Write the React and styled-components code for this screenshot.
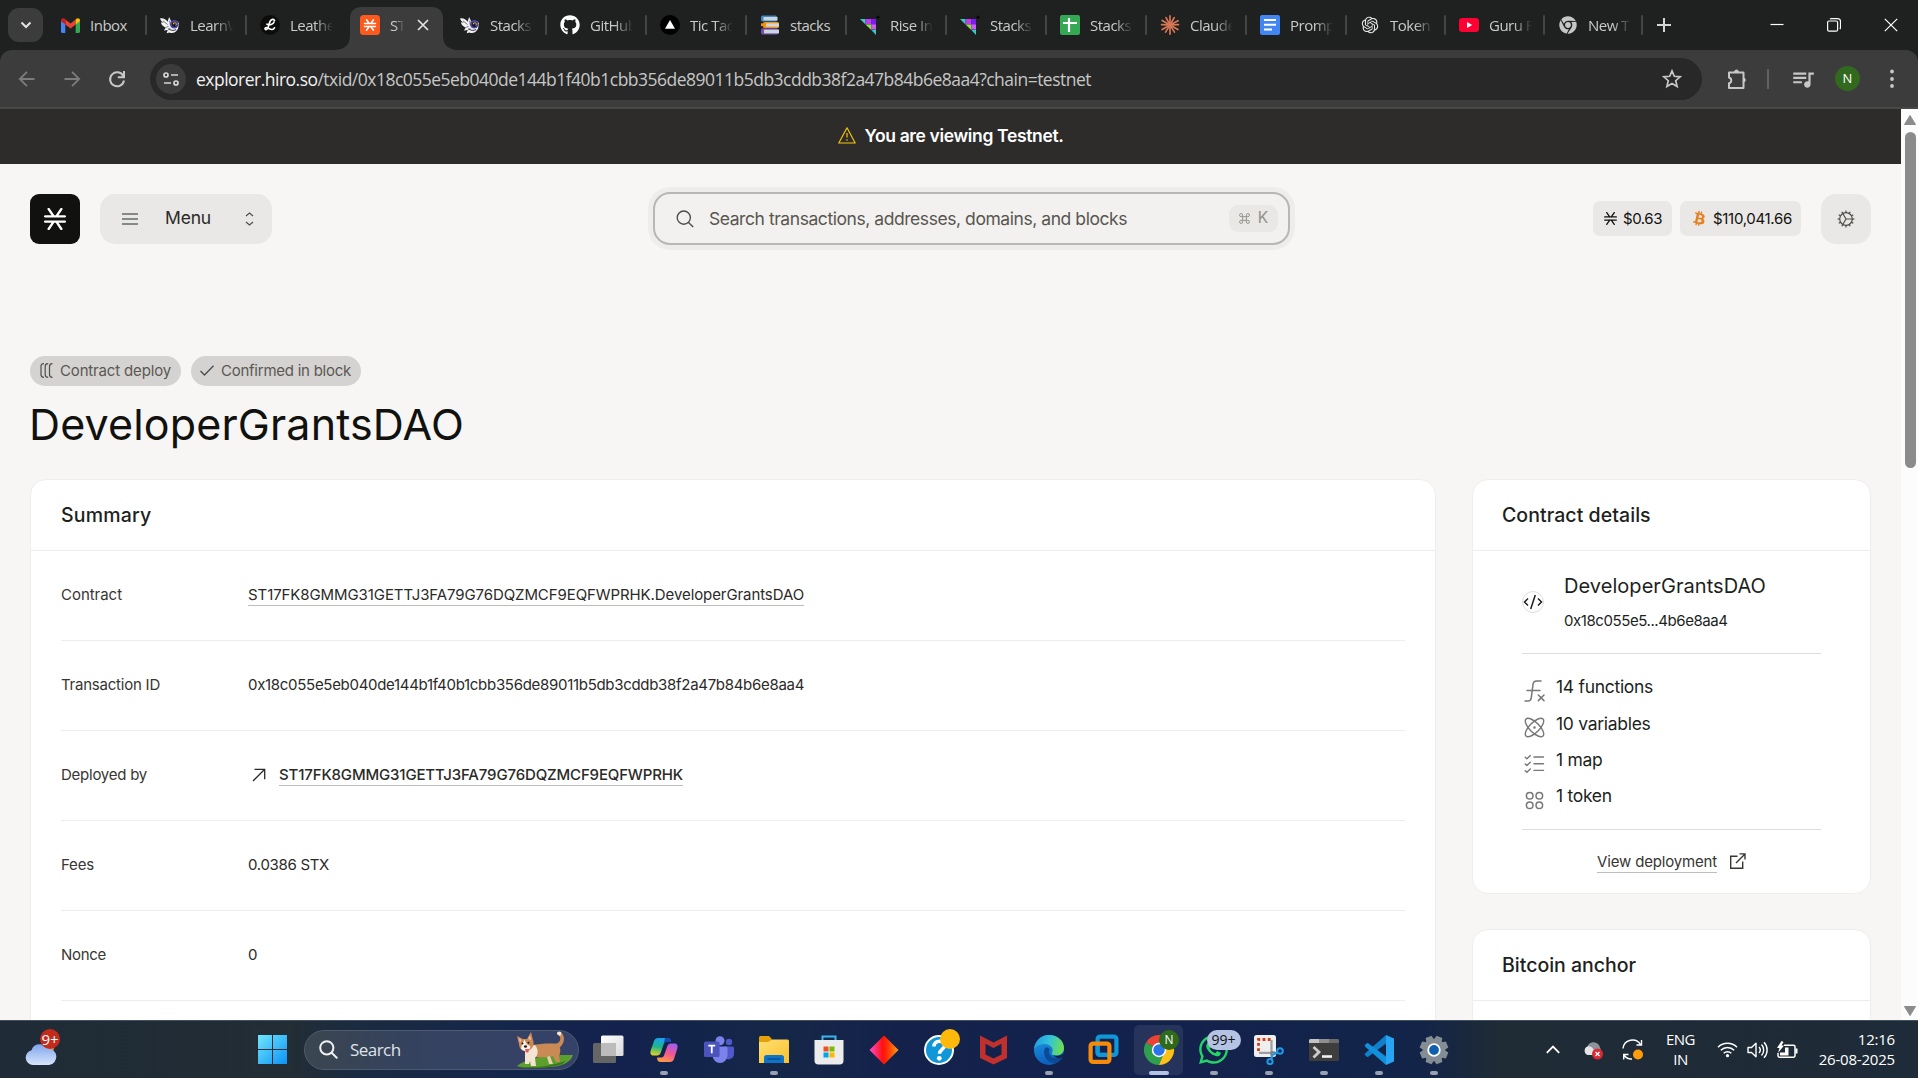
import React from 'react';
import styled, { createGlobalStyle, css } from 'styled-components';
import { FaGithub, FaBtc, FaChrome, FaWhatsapp } from 'react-icons/fa';
import { RiOpenaiFill } from 'react-icons/ri';
import { MdQueueMusic } from 'react-icons/md';

const ui = '"Open Sans", "Noto Sans", sans-serif';
const body = 'Inter, "Liberation Sans", sans-serif';

const GlobalStyle = createGlobalStyle`
  * { box-sizing: border-box; }
  body { margin: 0; overflow: hidden; }
  svg { display: block; flex: none; }
`;

const Screen = styled.div`
  width: 1918px;
  height: 1078px;
  display: flex;
  flex-direction: column;
  overflow: hidden;
  font-family: ${body};
  background: #f7f6f4;
`;

/* ---------- browser chrome ---------- */

const TabStrip = styled.div`
  height: 50px;
  flex: none;
  display: flex;
  background: #1f2120;
  padding-left: 8px;
`;

const TabSearch = styled.div`
  width: 35px;
  height: 34px;
  margin: 8px 3px 0 0;
  border-radius: 11px;
  background: #3c3c3c;
  display: flex;
  align-items: center;
  justify-content: center;
`;

const Tab = styled.div`
  position: relative;
  width: ${(p) => p.$width}px;
  flex: none;
  height: 50px;
  padding: 0 12px 0 14px;
  display: flex;
  align-items: center;
  gap: 10px;
  ${(p) =>
    p.$divider &&
    css`
      &::after {
        content: '';
        position: absolute;
        right: -1px;
        top: 15px;
        width: 2px;
        height: 20px;
        border-radius: 1px;
        background: #434544;
      }
    `}
`;

const ActiveShape = styled.svg`
  position: absolute;
  left: -13px;
  top: 7px;
`;

const TabIcon = styled.div`
  position: relative;
  width: 20px;
  height: 20px;
  flex: none;
  display: flex;
  align-items: center;
  justify-content: center;
`;

const TabTitle = styled.div`
  position: relative;
  flex: none;
  width: ${(p) => p.$width || 43}px;
  overflow: hidden;
  white-space: nowrap;
  font: 400 15px/20px ${ui};
  letter-spacing: -0.5px;
  color: #c9cac9;
  ${(p) =>
    p.$fade &&
    css`
      mask-image: linear-gradient(90deg, #000 ${p.$width ? 40 : 58}%, transparent);
    `}
`;

const TabClose = styled.svg`
  position: relative;
  margin-left: 3px;
`;

const NewTab = styled.div`
  width: 44px;
  display: flex;
  align-items: center;
  justify-content: center;
`;

const WindowButtons = styled.div`
  margin-left: auto;
  display: flex;
  align-items: center;
  gap: 43px;
  padding: 0 20px 1px 0;
`;

const Toolbar = styled.div`
  height: 59px;
  flex: none;
  background: #1f2120;
`;

const ToolbarInner = styled.div`
  height: 59px;
  border-radius: 12px 12px 0 0;
  background: #3c3c3c;
  border-bottom: 2px solid #474949;
  display: flex;
  align-items: center;
  padding-left: 15px;
`;

const NavButtons = styled.div`
  display: flex;
  gap: 21px;
  width: 135px;
`;

const AddressBar = styled.div`
  width: 1552px;
  height: 42px;
  border-radius: 21px;
  background: #282828;
  display: flex;
  align-items: center;
  padding: 0 20px 0 6px;
`;

const SiteInfo = styled.div`
  width: 30px;
  height: 30px;
  border-radius: 50%;
  background: #3c3c3c;
  display: flex;
  align-items: center;
  justify-content: center;
  margin-right: 10px;
`;

const Url = styled.div`
  flex: 1;
  font: 400 17.5px/24px ${ui};
  letter-spacing: -0.512px;
  color: #c5c7c5;
  padding-top: 1px;
  b { font-weight: 400; color: #f1f1f1; }
`;

const ToolbarActions = styled.div`
  flex: 1;
  display: flex;
  align-items: center;
  padding-left: 24px;
`;

const ToolbarDivider = styled.div`
  width: 2px;
  height: 20px;
  background: #616362;
  margin: 0 21px 0 19px;
`;

const Avatar = styled.div`
  width: 25px;
  height: 25px;
  border-radius: 50%;
  background: #33691e;
  color: #fff;
  font: 400 13px/25px ${ui};
  text-align: center;
  margin: 0 30px 0 19px;
`;

/* ---------- page ---------- */

const Viewport = styled.div`
  flex: 1;
  min-height: 0;
  display: flex;
`;

const Page = styled.div`
  width: 1901px;
  height: 911px;
  overflow: hidden;
`;

const Scrollbar = styled.div`
  width: 17px;
  background: #fcfcfc;
  display: flex;
  flex-direction: column;
  align-items: center;
  padding: 6px 0 4px 1px;
`;

const Thumb = styled.div`
  width: 11px;
  height: 336px;
  margin: 7px 0 auto;
  border-radius: 6px;
  background: #8b8b8b;
`;

const Banner = styled.div`
  height: 55px;
  background: #2e2c2a;
  color: #fff;
  display: flex;
  align-items: center;
  justify-content: center;
  gap: 8px;
  padding: 0 0 2px 1px;
  font-size: 17.5px;
  font-weight: 600;
  letter-spacing: -0.346px;
`;

const Header = styled.header`
  height: 110px;
  padding: 0 30px;
  display: flex;
  align-items: center;
`;

const Logo = styled.div`
  width: 50px;
  height: 50px;
  border-radius: 9px;
  background: #11110f;
  display: flex;
  align-items: center;
  justify-content: center;
`;

const MenuButton = styled.div`
  width: 172px;
  height: 50px;
  margin-left: 20px;
  padding: 0 18px 0 22px;
  border-radius: 15px;
  background: #e9e8e6;
  display: flex;
  align-items: center;
  font-size: 17.5px;
  letter-spacing: -0.174px;
  color: #2b2a28;
`;

const MenuText = styled.span`
  margin: 0 auto 3px 27px;
`;

const SearchBox = styled.div`
  width: 637px;
  height: 53px;
  margin: 0 0 1px 381px;
  padding: 0 10px 0 21px;
  border: 2px solid #b8b7b5;
  border-radius: 17px;
  box-shadow: 0 0 0 5px #eeedeb;
  background: #f2f1ef;
  display: flex;
  align-items: center;
`;

const Placeholder = styled.div`
  flex: 1;
  margin-left: 15px;
  font-size: 17.5px;
  letter-spacing: -0.439px;
  color: #595650;
`;

const Shortcut = styled.div`
  width: 49px;
  height: 27px;
  border-radius: 9px;
  background: #e9e8e6;
  color: #918f8b;
  display: flex;
  align-items: center;
  justify-content: center;
  gap: 8px;
  font-size: 15.5px;
  span { margin-bottom: 2px; }
`;

const Prices = styled.div`
  margin-left: auto;
  margin-right: 20px;
  display: flex;
  gap: 8px;
`;

const Price = styled.div`
  width: ${(p) => p.$width}px;
  height: 35px;
  margin-bottom: 1px;
  padding-left: ${(p) => p.$pad}px;
  border-radius: 7px;
  background: #e9e8e6;
  display: flex;
  align-items: center;
  gap: 6px;
  font-size: 15px;
  letter-spacing: ${(p) => p.$ls}px;
  color: #11110f;
`;

const SettingsButton = styled.div`
  width: 50px;
  height: 50px;
  border-radius: 15px;
  background: #e9e8e6;
  display: flex;
  align-items: center;
  justify-content: center;
`;

const Tags = styled.div`
  margin: 82px 0 0 30px;
  display: flex;
  gap: 10px;
`;

const Tag = styled.div`
  width: ${(p) => p.$width}px;
  height: 30px;
  padding: 0 0 1px ${(p) => p.$pad}px;
  border-radius: 15px;
  background: #d4d3d1;
  color: #5b5853;
  display: flex;
  align-items: center;
  gap: 7px;
  font-size: 15px;
  letter-spacing: ${(p) => p.$ls}px;
`;

const Title = styled.h1`
  margin: 11px 0 0 29px;
  font-size: 43px;
  font-weight: 400;
  line-height: 54px;
  letter-spacing: 0.15px;
  color: #11110f;
`;

const Columns = styled.div`
  margin: 28px 30px 0 30px;
  display: flex;
  justify-content: space-between;
  align-items: flex-start;
`;

const Side = styled.div`
  width: 399px;
  display: flex;
  flex-direction: column;
  gap: 35px;
`;

const Card = styled.section`
  width: ${(p) => (p.$width ? `${p.$width}px` : '100%')};
  border: 1px solid #efeeec;
  border-radius: 16px;
  background: #fff;
`;

const CardHeader = styled.h2`
  margin: 0;
  height: 71px;
  padding-left: ${(p) => p.$pad || 30}px;
  border-bottom: 1px solid #eeedec;
  display: flex;
  align-items: center;
  font-size: 19.5px;
  font-weight: 500;
  letter-spacing: ${(p) => p.$ls || 0}px;
  color: #211f1d;
`;

const Rows = styled.div`
  padding: 0 30px;
`;

const Row = styled.div`
  height: 90px;
  padding-bottom: 2px;
  border-bottom: 1px solid #eeedec;
  display: flex;
  align-items: center;
  font-size: 15px;
  color: #2b2a28;
`;

const Label = styled.div`
  width: 187px;
  letter-spacing: ${(p) => p.$ls}px;
  color: #383632;
`;

const Value = styled.div`
  display: flex;
  align-items: center;
  gap: 13px;
  letter-spacing: ${(p) => p.$ls}px;
`;

const Link = styled.span`
  border-bottom: 1px solid #bfbdba;
  font-weight: ${(p) => (p.$medium ? 500 : 400)};
  line-height: 20px;
  margin-top: 1px;
`;

const Details = styled.div`
  height: 342px;
  padding: 0 49px;
`;

const Identity = styled.div`
  height: 103px;
  border-bottom: 1px solid #dedddb;
  display: flex;
  align-items: center;
  gap: 20px;
`;

const CodeBadge = styled.div`
  width: 22px;
  height: 22px;
  border: 1px solid #e0dfe0;
  border-radius: 50%;
  display: flex;
  align-items: center;
  justify-content: center;
`;

const Names = styled.div`
  color: #211f1d;
`;

const ContractName = styled.div`
  font-size: 20px;
  line-height: 26px;
  letter-spacing: 0.05px;
`;

const Hash = styled.div`
  margin-top: 12px;
  font-size: 15px;
  line-height: 20px;
  letter-spacing: -0.42px;
`;

const Stats = styled.div`
  height: 176px;
  padding-top: 15px;
  border-bottom: 1px solid #dedddb;
`;

const Stat = styled.div`
  height: 36.4px;
  padding-left: 2px;
  display: flex;
  align-items: center;
  gap: 11px;
  font-size: 17.5px;
  letter-spacing: -0.29px;
  color: #211f1d;
  svg { margin-top: 8px; }
  span { margin-bottom: 1px; }
`;

const Deployment = styled.div`
  height: 63px;
  display: flex;
  align-items: center;
  justify-content: center;
  gap: 12px;
  font-size: 15px;
  letter-spacing: -0.17px;
  color: #383632;
`;

/* ---------- taskbar ---------- */

const Taskbar = styled.div`
  position: relative;
  height: 58px;
  flex: none;
  border-top: 1px solid #43505b;
  background: linear-gradient(90deg, #1f2b36 0, #222d35 290px, #1b2b40 350px, #15264b 500px, #12224d 620px, #152748 780px, #14224b 900px, #12224d 1150px, #132449 1420px, #1f2b35 1500px, #1e2b38 1918px);
  display: flex;
  align-items: center;
  color: #fff;
  font-family: ${ui};
`;

const Weather = styled.div`
  position: relative;
  width: 229px;
  height: 56px;
  padding: 18px 0 0 25px;
`;

const Badge = styled.div`
  position: absolute;
  left: ${(p) => p.$x}px;
  top: ${(p) => p.$y}px;
  width: ${(p) => p.$w}px;
  height: 20px;
  border-radius: 10px;
  background: ${(p) => p.$bg};
  color: ${(p) => p.$color || '#fff'};
  font: 400 ${(p) => p.$size || 14}px/20px ${ui};
  text-align: center;
`;

const StartButton = styled.div`
  width: 75px;
  padding-left: 29px;
`;

const TaskSearch = styled.div`
  width: 275px;
  height: 40px;
  padding: 0 4px 0 14px;
  border: 1px solid #4d5a70;
  border-radius: 20px;
  background: linear-gradient(90deg, #3a464f, #35425f 40%, #35426a);
  display: flex;
  align-items: center;
  font-size: 17px;
  letter-spacing: -0.55px;
  color: #dfe3e8;
  span { margin: 0 auto 0 12px; }
`;

const Apps = styled.div`
  margin-left: 2px;
  display: flex;
`;

const AppButton = styled.div`
  position: relative;
  width: 55px;
  height: 56px;
  display: flex;
  align-items: center;
  justify-content: center;
  &::before {
    content: '';
    position: absolute;
    inset: 3px;
    border-radius: 5px;
    background: ${(p) => (p.$active ? '#26345b' : 'none')};
  }
`;

const AppIcon = styled.div`
  position: relative;
  ${(p) => p.$offset && css`transform: translate(3px, -3px);`}
`;

const Indicator = styled.div`
  position: absolute;
  bottom: 3px;
  width: ${(p) => (p.$active ? 20 : 8)}px;
  height: 4px;
  border-radius: 2px;
  background: ${(p) => (p.$active ? '#b4c3e4' : '#98a0b1')};
`;

const Tray = styled.div`
  margin-left: auto;
  padding-right: 23px;
  display: flex;
  align-items: center;
`;

const TraySlot = styled.div`
  width: ${(p) => p.$width}px;
  display: flex;
  justify-content: center;
`;

const TrayText = styled.div`
  width: ${(p) => p.$width}px;
  padding-bottom: 1px;
  text-align: ${(p) => p.$align};
  font-size: 15px;
  line-height: 20px;
  letter-spacing: ${(p) => p.$ls}px;
`;

/* ---------- drawings ---------- */

const StacksMark = ({ size, color, width = 2 }) => (
  <svg width={size} height={size} viewBox="0 0 20 20" fill="none" stroke={color} strokeWidth={width} strokeLinecap="round">
    <path d="M1 7.600h18M1 12.400h18M4.200 0.900l4.600 6.700M15.800 0.900l-4.600 6.700M4.200 19.100l4.600-6.700M15.800 19.100l-4.600-6.700" />
  </svg>
);

const Gmail = () => (
  <svg width="19" height="15" viewBox="0 0 19 15">
    <path d="M0 3v10.600a1.300 1.300 0 0 0 1.300 1.300H4.300V5.500z" fill="#4285f4" />
    <path d="M19 3v10.600a1.300 1.300 0 0 1-1.300 1.300H14.700V5.500z" fill="#34a853" />
    <path d="M4.300 1.500l5.200 4 5.200-4v5L9.500 10.500 4.300 6.500z" fill="#ea4335" />
    <path d="M0 2.400C0 .2 2.200-.5 3.800.8l.5.400v5.300L0 3.300z" fill="#c5221f" />
    <path d="M19 2.400c0-2.200-2.200-2.900-3.800-1.600l-.5.400v5.300L19 3.300z" fill="#fbbc04" />
  </svg>
);

const Bee = () => (
  <svg width="20" height="17" viewBox="0 0 21 18">
    <path d="M0 1.500c3-.8 6 .5 8 3.500L9.500 0l2.500 5c3-1.800 6-1 8 1.500l-1 6c-2 4-6 5.500-9 4l-3 .8 1-3.500-4 .5 2-3C3 10 .8 7.500 1 5.500l3 .5C2 5 .3 3.500 0 1.500z" fill="#f1f1f4" />
    <path d="M3 4l5 4M10 4l1 5M6 11l3-1M8 14l3-2" stroke="#55565f" strokeWidth=".8" />
    <circle cx="15" cy="7.800" r="4.500" fill="#4b49a8" />
    <circle cx="15.200" cy="7.800" r="2.800" fill="#17162f" />
    <path d="M14 7.800a1.600 1.600 0 1 1 2.500 1.200" stroke="#f0b429" fill="none" strokeWidth="1.100" />
    <path d="M9 12.300c2 2 5 2.500 8 1" stroke="#2a2a38" fill="none" />
  </svg>
);

const Leather = () => (
  <svg width="20" height="20" viewBox="0 0 20 20">
    <circle cx="10" cy="10" r="10" fill="#0c0c0b" />
    <path d="M14.500 5.500c-.5-1.800-3.200-1.500-4.300.6C9 8.500 8.800 13 6.800 14.300c-1.200.7-2.300-.2-1.500-1.300 1.500-1.600 4.500 1.900 7 1.500 1-.1 1.800-.7 2.200-1.700M7 9.200c2.500 1.200 6.200.2 7-2.200" stroke="#fff" strokeWidth="1.700" fill="none" strokeLinecap="round" />
  </svg>
);

const StacksTab = () => (
  <svg width="20" height="20" viewBox="0 0 20 20">
    <rect width="20" height="20" rx="3.500" fill="#fc5a1c" />
    <path d="M4.500 8.500h11M4.500 11.500h11M6.500 4.800l2.700 3.700M13.500 4.800l-2.700 3.700M6.500 15.200l2.700-3.700M13.500 15.200l-2.700-3.700" stroke="#fff" strokeWidth="1.500" strokeLinecap="round" />
  </svg>
);

const Vercel = () => (
  <svg width="20" height="20" viewBox="0 0 20 20">
    <circle cx="10" cy="10" r="10" fill="#000" />
    <path d="M10 5l5 8.700H5z" fill="#fff" />
  </svg>
);

const Books = () => (
  <svg width="20" height="20" viewBox="0 0 20 20">
    <rect x="1" y="0.500" width="16" height="6" rx="1.500" fill="#3b88c3" />
    <rect x="3.500" y="2" width="14" height="3.500" fill="#ccd6dd" />
    <rect x="3" y="7" width="16" height="6" rx="1.500" fill="#f4900c" />
    <rect x="1" y="8.300" width="3" height="2.800" fill="#f4900c" />
    <rect x="6" y="8.300" width="13" height="3.400" fill="#ccd6dd" />
    <rect x="1" y="13.300" width="17" height="6.200" rx="1.500" fill="#744eaa" />
    <rect x="4" y="14.600" width="15" height="3.800" fill="#ccd6dd" />
  </svg>
);

const Rise = () => (
  <svg width="21" height="20" viewBox="0 0 21 20">
    <path d="M0 4l5.500 0v5.500z" fill="#35d0c0" />
    <path d="M5.500 4h6v5.500h-6z" fill="#c13cf0" />
    <path d="M11.500 4H16v6h-4.500z" fill="#7a1df0" />
    <path d="M5.500 9.500h6v5.700z" fill="#8ae04a" />
    <path d="M11.500 9.500H16v5h-4.500z" fill="#d05cf5" />
    <path d="M11.500 15.200L16 14.500V20z" fill="#37c9c4" />
    <path d="M18 0l.7 1.600 1.600.7-1.600.7-.7 1.600-.7-1.600-1.600-.7 1.600-.7z" fill="#000" />
  </svg>
);

const Sheets = () => (
  <svg width="20" height="20" viewBox="0 0 20 20">
    <rect width="20" height="20" rx="2" fill="#34a853" />
    <path d="M9 3v14M3 8h14" stroke="#fff" strokeWidth="2.200" />
  </svg>
);

const Claude = () => (
  <svg width="20" height="20" viewBox="0 0 20 20" stroke="#d97757" strokeWidth="1.700" strokeLinecap="round">
    {[0, 30, 62, 88, 120, 148, 180, 212, 240, 272, 300, 332].map((a, i) => (
      <path key={a} d={`M10 9V${i % 2 ? 1.6 : 0.9}`} transform={`rotate(${a} 10 10)`} />
    ))}
  </svg>
);

const Docs = () => (
  <svg width="20" height="20" viewBox="0 0 20 20">
    <rect width="20" height="20" rx="2" fill="#4285f4" />
    <path d="M4 5h12M4 9.800h12M4 14.400h8" stroke="#fff" strokeWidth="2" />
  </svg>
);

const YouTube = () => (
  <svg width="20" height="14" viewBox="0 0 20 14">
    <rect width="20" height="14" rx="3.200" fill="#ff0033" />
    <path d="M8 4l5.200 3L8 10z" fill="#fff" />
  </svg>
);

const FunctionIcon = () => (
  <svg width="21" height="22" viewBox="0 0 21 22" fill="none" stroke="#77777a" strokeWidth="1.500" strokeLinecap="round">
    <path d="M1 21h3c2.400 0 3-1.200 3.300-3.400L9 4.400C9.300 2 10.200 1 12.500 1H17M3 10.500h13M14.300 15l5.700 5.600M20 15l-5.700 5.600" />
  </svg>
);

const AtomIcon = () => (
  <svg width="21" height="21" viewBox="0 0 21 21" fill="none" stroke="#77777a" strokeWidth="1.400">
    <ellipse cx="10.500" cy="10.500" rx="12" ry="5" transform="rotate(45 10.500 10.500)" />
    <ellipse cx="10.500" cy="10.500" rx="12" ry="5" transform="rotate(-45 10.500 10.500)" />
    <circle cx="10.500" cy="10.500" r=".6" />
  </svg>
);

const ListIcon = () => (
  <svg width="21" height="20" viewBox="0 0 21 20" fill="none" stroke="#77777a" strokeWidth="1.400" strokeLinecap="round" strokeLinejoin="round">
    <path d="M10 3h9.500M10 9.700h9.500M10 16.400h9.500M1.200 3.300l1.700 1.500L6.300 1.500M1.200 10l1.700 1.500 3.400-3.300M1.200 16.700l1.700 1.500 3.400-3.300" />
  </svg>
);

const CirclesIcon = () => (
  <svg width="21" height="21" viewBox="0 0 21 21" fill="none" stroke="#77777a" strokeWidth="1.500">
    {[5.7, 15.3].map((x) => [5.7, 15.3].map((y) => <circle key={`${x}-${y}`} cx={x} cy={y} r="3.300" />))}
  </svg>
);

const Gear = () => (
  <svg width="18" height="18" viewBox="0 0 18 18" fill="none" stroke="#4f4d49" strokeWidth="1.200">
    <circle cx="9" cy="9" r="6.300" />
    <path d="M9 9h6.300M9 9L5.800 3.500M9 9l-3.200 5.500" />
    {Array.from({ length: 12 }, (_, i) => (
      <path key={i} d="M9 2.700V.6" transform={`rotate(${i * 30} 9 9)`} />
    ))}
  </svg>
);

const Corgi = () => (
  <svg width="58" height="40" viewBox="0 0 58 40">
    <path d="M1 36c6-5 20-12 56-11-2 7-10 11-22 12-13 1-30 1.500-34-1z" fill="#5c9f2c" />
    <path d="M2 36.500c14 2 34 0 48-6l-4 3.500c-12 4-32 5.500-44 2.500z" fill="#39761b" />
    <path d="M38 14c5 0 7-4 6-7-1-2-3-2-3-4 3-2 7 1 7 6s-4 9-7 10z" fill="#c98a55" />
    <path d="M41 4c0-3 2-3 4-2 1 1 0 3-1 4z" fill="#f6e6d6" />
    <path d="M16 15c8-1 18-2 25-1 4 2 4 8 2 12l1 6h-4l-3-6c-7 2-13 1-19 1z" fill="#c98a55" />
    <path d="M9 18l10-3c4 5 3 10 0 13l1 8h-5l-1-5-1 3H9z" fill="#f3e4d4" />
    <path d="M34 26l3 8h-4l-2-7z" fill="#e9cdb0" />
    <path d="M1 6l6 3h4l4-7 2 8c2 5-1 10-6 11-5 1-8-3-8-7z" fill="#c98a55" />
    <path d="M2.500 8l3.200 2L4 13zM14 5l1.200 5-3-1z" fill="#f0b9a1" />
    <path d="M8.500 9.500L10.500 14l4 2.500c-1 5-7 6-9.500 2l1-4z" fill="#fff4ea" />
    <circle cx="6.500" cy="13.500" r="1" fill="#241a17" />
    <circle cx="12.500" cy="12.700" r="1" fill="#241a17" />
    <ellipse cx="9.500" cy="16.500" rx="1.600" ry="1.200" fill="#241a17" />
    <path d="M9 19h4l-.5 3c-1 1.300-3 .3-3-1z" fill="#e55768" />
  </svg>
);

const TaskView = () => (
  <svg width="31" height="29" viewBox="0 0 31 29">
    <defs>
      <linearGradient id="tv" x1="0" y1="0" x2="1" y2="1"><stop stopColor="#fff" /><stop offset="1" stopColor="#d9d9d9" /></linearGradient>
    </defs>
    <rect x="0" y="8" width="23" height="20" rx="1.500" fill="#656565" />
    <rect x="8" y="0.500" width="22.500" height="20.500" rx="1.500" fill="url(#tv)" />
    <path d="M8 8h15v13H9.500A1.500 1.500 0 0 1 8 19.500z" fill="#bcbcbc" />
  </svg>
);

const Copilot = () => (
  <svg width="28" height="26" viewBox="0 0 28 26">
    <defs>
      <linearGradient id="cp1" x1="0.400" y1="0" x2="0.200" y2="1"><stop stopColor="#1aa0f0" /><stop offset=".5" stopColor="#1fb58a" /><stop offset="1" stopColor="#e9d421" /></linearGradient>
      <linearGradient id="cp2" x1="0.700" y1="0" x2="0.300" y2="1"><stop stopColor="#a35cf2" /><stop offset=".5" stopColor="#f0588f" /><stop offset="1" stopColor="#ff9a44" /></linearGradient>
    </defs>
    <path d="M8 1h9c3 0 3.500 1 4 4h-5c-1.500 0-2 1-2.500 2.500L11 15c-.8 2.500-2 3.500-4 3.500H3.500C.5 18.500 0 16 .700 13.500L4 4c.8-2 2-3 4-3z" fill="url(#cp1)" />
    <path d="M15 1h3c2 0 2.500 1 3 4h-5c-1.300 0-2 .8-2.300 2z" fill="#1746b5" />
    <path d="M20 25h-9c-3 0-3.800-1.500-4-4.500h4.500c1.500 0 2.200-1 2.700-2.500L17 10c.8-2.500 2-3.500 4-3.500h3.500c3 0 3.500 2.500 2.800 5L24 22c-.8 2-2 3-4 3z" fill="url(#cp2)" />
  </svg>
);

const Teams = () => (
  <svg width="30" height="27" viewBox="0 0 30 27">
    <circle cx="25" cy="6" r="3.200" fill="#5059c9" />
    <circle cx="16" cy="4.700" r="4.500" fill="#7b83eb" />
    <path d="M20 10.500h8.500a1.500 1.500 0 0 1 1.500 1.500v6a5.500 5.500 0 0 1-10 3z" fill="#5059c9" />
    <path d="M9 10.500h13a1.500 1.500 0 0 1 1.500 1.500v7.500a7.500 7.500 0 0 1-15 0z" fill="#7b83eb" />
    <rect x="0" y="5.500" width="15.500" height="15.500" rx="1.500" fill="#4b53bc" />
    <path d="M4.300 9.700h6.900M7.750 9.700v7.500" stroke="#fff" strokeWidth="1.800" />
  </svg>
);

const Folder = () => (
  <svg width="30" height="27" viewBox="0 0 30 27">
    <defs><linearGradient id="fd" x1="0" y1="0" x2="1" y2="1"><stop stopColor="#ffdf73" /><stop offset="1" stopColor="#f9c22e" /></linearGradient></defs>
    <path d="M0 1.500A1.500 1.500 0 0 1 1.500 0H10l3 3-2 3H0z" fill="#e3a008" />
    <path d="M0 6h9l4-2.500h15.500A1.500 1.500 0 0 1 30 5v22H0z" fill="url(#fd)" />
    <path d="M5 27v-5.500c0-1.500 1-2.500 2.500-2.500h15c1.500 0 2.500 1 2.500 2.500V27z" fill="#0f74c8" />
    <path d="M8.500 23h13" stroke="#0a4e92" strokeWidth="1.500" />
  </svg>
);

const Store = () => (
  <svg width="30" height="30" viewBox="0 0 30 30">
    <path d="M8.500 6V1.500h13V6" fill="none" stroke="#3ab4ec" strokeWidth="2" />
    <path d="M.5 5h29v20.500a4 4 0 0 1-4 4h-21a4 4 0 0 1-4-4z" fill="#ececec" />
    <path d="M9.500 11.500h5v5h-5z" fill="#f25022" /><path d="M15.500 11.500h5v5h-5z" fill="#7fba00" />
    <path d="M9.500 17.500h5v5h-5z" fill="#00a4ef" /><path d="M15.500 17.500h5v5h-5z" fill="#ffb900" />
  </svg>
);

const Diamond = () => (
  <svg width="30" height="30" viewBox="0 0 30 30">
    <defs><linearGradient id="dm"><stop stopColor="#ff4fd0" /><stop offset=".45" stopColor="#ff1010" /><stop offset=".6" stopColor="#ff2a08" /><stop offset="1" stopColor="#ff9d10" /></linearGradient></defs>
    <path d="M15 .5L29.500 15 15 29.500.5 15z" fill="url(#dm)" />
  </svg>
);

const Help = () => (
  <svg width="36" height="36" viewBox="0 0 36 36">
    <circle cx="15" cy="21" r="14" fill="#0f97d7" stroke="#fff" strokeWidth="2" />
    <path d="M10 17.500c0-3.500 2.400-5.300 5.300-5.300s5.200 1.700 5.200 4.500c0 3.700-5 3.900-5 8" stroke="#fff" strokeWidth="3.600" fill="none" />
    <circle cx="15.300" cy="29.300" r="2.400" fill="#fff" />
    <circle cx="26" cy="10" r="10" fill="#ffb90b" />
  </svg>
);

const McAfee = () => (
  <svg width="27" height="30" viewBox="0 0 27 30">
    <path d="M0 .5l13.500 7 13.500-7v22.500l-13.500 6.500L0 23zM5.500 8.800v10.700l8 4 8-4V8.800l-8 4.200z" fill="#c0302c" fillRule="evenodd" />
  </svg>
);

const Edge = () => (
  <svg width="30" height="30" viewBox="0 0 30 30">
    <defs>
      <linearGradient id="eg1" x1="0" y1="0.300" x2="1" y2="0.500"><stop stopColor="#1f9ce5" /><stop offset=".5" stopColor="#33c3d8" /><stop offset="1" stopColor="#6ee04c" /></linearGradient>
      <linearGradient id="eg2" x1="0" y1="0" x2="0.300" y2="1"><stop stopColor="#1f9ce5" /><stop offset="1" stopColor="#0b5fbd" /></linearGradient>
    </defs>
    <circle cx="15" cy="15" r="15" fill="url(#eg2)" />
    <path d="M0 14C1 6 7 0 15 0c9 0 15 6 15 13 0 5-4 7.500-8 7.500-3 0-5-1-4-3 1-2 1-4-1-6-5-5-14-2-17 2.500z" fill="url(#eg1)" />
    <path d="M11 13c-3 7 2 15 10 15.500 3-.8 6-3.500 7.500-6.500-7 3-14 0-13.500-5 0-2 .6-3 .6-3-1.500-1.600-3.600-1.800-4.600-1z" fill="#0c4a96" />
    <path d="M19.500 20c3 1.500 7 1 9.500-1.500l1-1.500-.8 4-1.600 1.800c-4 1.200-7-.8-8.100-2.800z" fill="#14234b" />
  </svg>
);

const VMware = () => (
  <svg width="31" height="31" viewBox="0 0 31 31" fill="none" strokeWidth="4.200">
    <rect x="9.600" y="2.600" width="18.800" height="18.300" rx="2.500" stroke="#0f97d7" />
    <rect x="2.600" y="9.600" width="18.800" height="18.300" rx="2.500" stroke="#f68b0a" />
    <path d="M9.600 12v6.500a2.500 2.500 0 0 0 2.500 2.400h6" stroke="#0f97d7" />
  </svg>
);

const ChromeColor = () => (
  <svg width="36" height="36" viewBox="0 0 36 36">
    <path d="M15 21L2 13.500a15 15 0 0 1 26 0z" fill="#ea4335" />
    <path d="M15 21L2 13.500A15 15 0 0 0 15 36l6.500-11.300z" fill="#2f9e4f" />
    <path d="M15 21h6.500L15 36A15 15 0 0 0 28 13.500H15z" fill="#fbc116" />
    <circle cx="15" cy="21" r="7.200" fill="#fff" />
    <circle cx="15" cy="21" r="5.700" fill="#2a75ea" />
  </svg>
);

const Snip = () => (
  <svg width="30" height="30" viewBox="0 0 30 30">
    <rect width="22" height="22" rx="2.500" fill="#efefef" />
    <path d="M4.500 16V4.500H18" fill="none" stroke="#d83b12" strokeWidth="2.800" strokeDasharray="2.800 2.400" />
    <path d="M17.500 5v14M5 17.800h15" stroke="#9aa0a5" strokeWidth="2.200" />
    <path d="M17 17l6 1M17 17l1 6" stroke="#777d82" strokeWidth="2" />
    <circle cx="26" cy="16" r="2.800" fill="none" stroke="#1d9be6" strokeWidth="2" />
    <circle cx="16" cy="26.500" r="2.600" fill="none" stroke="#1d9be6" strokeWidth="2" />
    <path d="M17.500 24l1-4 5-2.500" stroke="#1d9be6" strokeWidth="2" fill="none" />
  </svg>
);

const Terminal = () => (
  <svg width="30" height="22" viewBox="0 0 30 22">
    <rect width="30" height="22" rx="1.500" fill="#3e3e3e" />
    <path d="M1.500 0H10v4H0V1.500A1.500 1.500 0 0 1 1.500 0z" fill="#c4c4c4" /><path d="M10 0h10v4H10z" fill="#8f8f8f" /><path d="M20 0h8.500A1.500 1.500 0 0 1 30 1.500V4H20z" fill="#6c6c6c" />
    <path d="M4.500 8l5.500 5-5.500 5.500" fill="none" stroke="#ccc" strokeWidth="2.800" />
    <path d="M13 17.500h10" stroke="#f2f2f2" strokeWidth="2.600" />
  </svg>
);

const VSCode = () => (
  <svg width="30" height="30" viewBox="0 0 30 30">
    <path d="M22 0l8 3.500v23L22 30z" fill="#27a4f2" />
    <path d="M22 0L1 18.500a1 1 0 0 0 0 1.500l1.800 1.700c.5.400 1 .4 1.500 0L22 8.500z" fill="#0f80cc" />
    <path d="M22 30L1 11.500a1 1 0 0 1 0-1.500l1.800-1.700c.5-.4 1-.4 1.500 0L22 21.500z" fill="#1290dc" />
  </svg>
);

const SettingsApp = () => (
  <svg width="30" height="30" viewBox="0 0 30 30">
    <g fill="#858d94">
      {Array.from({ length: 8 }, (_, i) => (
        <path key={i} d="M11.800 0.800h6.400l1 5h-8.400z" transform={`rotate(${i * 45 + 22.5} 15 15)`} />
      ))}
      <circle cx="15" cy="15" r="11.300" />
    </g>
    <circle cx="15" cy="15" r="5.800" fill="#0f5fae" stroke="#fff" strokeWidth="1.800" />
  </svg>
);

const tabs = [
  { title: 'Inbox', icon: <Gmail />, width: 100, divider: true },
  { title: 'LearnW', icon: <Bee />, width: 100, divider: true, fade: true },
  { title: 'Leathe', icon: <Leather />, width: 100, fade: true },
  { title: 'ST', icon: <StacksTab />, width: 100, fade: true, active: true },
  { title: 'Stacks', icon: <Bee />, width: 100, divider: true, fade: true },
  { title: 'GitHub', icon: <FaGithub size={20} color="#fff" />, width: 100, divider: true, fade: true },
  { title: 'Tic Tac', icon: <Vercel />, width: 100, divider: true, fade: true },
  { title: 'stacks', icon: <Books />, width: 100, divider: true },
  { title: 'Rise In', icon: <Rise />, width: 100, divider: true, fade: true },
  { title: 'Stacks', icon: <Rise />, width: 100, divider: true, fade: true },
  { title: 'Stacks', icon: <Sheets />, width: 100, divider: true, fade: true },
  { title: 'Claude', icon: <Claude />, width: 100, divider: true, fade: true },
  { title: 'Promp', icon: <Docs />, width: 100, divider: true, fade: true },
  { title: 'Token', icon: <RiOpenaiFill size={20} color="#e6e6e6" />, width: 99, divider: true, fade: true },
  { title: 'Guru F', icon: <YouTube />, width: 99, divider: true, fade: true },
  { title: 'New T', icon: <FaChrome size={18} color="#c4c7c5" />, width: 98, divider: true, fade: true },
];

const summary = [
  { label: 'Contract', ls: -0.03, value: 'ST17FK8GMMG31GETTJ3FA79G76DQZMCF9EQFWPRHK.DeveloperGrantsDAO', vls: -0.088, link: true },
  { label: 'Transaction ID', ls: -0.225, value: '0x18c055e5eb040de144b1f40b1cbb356de89011b5db3cddb38f2a47b84b6e8aa4', vls: -0.3 },
  { label: 'Deployed by', ls: -0.245, value: 'ST17FK8GMMG31GETTJ3FA79G76DQZMCF9EQFWPRHK', vls: -0.147, link: true, arrow: true },
  { label: 'Fees', ls: -0.167, value: '0.0386 STX', vls: -0.309 },
  { label: 'Nonce', ls: -0.294, value: '0', vls: 0 },
  { label: '', ls: 0, value: '', vls: 0 },
];

const stats = [
  { text: '14 functions', icon: <FunctionIcon /> },
  { text: '10 variables', icon: <AtomIcon /> },
  { text: '1 map', icon: <ListIcon /> },
  { text: '1 token', icon: <CirclesIcon /> },
];

const apps = [
  { icon: <TaskView /> },
  { icon: <Copilot />, open: true },
  { icon: <Teams /> },
  { icon: <Folder />, open: true },
  { icon: <Store /> },
  { icon: <Diamond /> },
  { icon: <Help />, offset: true },
  { icon: <McAfee /> },
  { icon: <Edge />, open: true },
  { icon: <VMware /> },
  { icon: <ChromeColor />, offset: true, open: true, active: true, badge: <Badge $x={28} $y={8} $w={20} $bg="#2f6a1c" $size={12}>N</Badge> },
  { icon: <FaWhatsapp size={33} color="#25d366" />, open: true, badge: <Badge $x={20.5} $y={8} $w={34} $bg="#b4c3e4" $color="#111">99+</Badge> },
  { icon: <Snip />, open: true },
  { icon: <Terminal />, open: true },
  { icon: <VSCode />, open: true },
  { icon: <SettingsApp />, open: true },
];

function BrowserChrome() {
  return (
    <>
      <TabStrip>
        <TabSearch>
          <svg width="12" height="8" viewBox="0 0 12 8" fill="none" stroke="#e3e3e3" strokeWidth="2"><path d="M1.500 1.500L6 6l4.500-4.500" /></svg>
        </TabSearch>
        {tabs.map((t, i) => (
          <Tab key={i} $width={t.width} $divider={t.divider}>
            {t.active && (
              <ActiveShape width="122" height="43" viewBox="0 0 122 43">
                <path d="M0 43c12 0 17-5 17-15V12C17 4 21 0 29 0h69c8 0 12 4 12 12v16c0 10 5 15 17 15z" fill="#3c3c3c" />
              </ActiveShape>
            )}
            <TabIcon>{t.icon}</TabIcon>
            <TabTitle $fade={t.fade} $width={t.active ? 14 : 0}>{t.title}</TabTitle>
            {t.active && (
              <TabClose width="12" height="12" viewBox="0 0 12 12" stroke="#e3e3e3" strokeWidth="1.700"><path d="M1 1l10 10M11 1L1 11" /></TabClose>
            )}
          </Tab>
        ))}
        <NewTab>
          <svg width="14" height="14" viewBox="0 0 14 14" stroke="#d4d6d4" strokeWidth="2"><path d="M7 0v14M0 7h14" /></svg>
        </NewTab>
        <WindowButtons>
          <svg width="14" height="14" viewBox="0 0 14 14" stroke="#fff" strokeWidth="1.200"><path d="M0.500 6.500h13" /></svg>
          <svg width="14" height="14" viewBox="0 0 14 14" fill="none" stroke="#fff" strokeWidth="1.200"><rect x=".6" y="3" width="10" height="10.200" rx="1.500" /><path d="M3 1.200C3.500.7 4 .6 4.500.6h6c2 0 3 1 3 3v6c0 .6-.2 1-.6 1.500" /></svg>
          <svg width="14" height="14" viewBox="0 0 14 14" stroke="#fff" strokeWidth="1.200"><path d="M.8.8l12.400 12.400M13.200.8L.8 13.200" /></svg>
        </WindowButtons>
      </TabStrip>
      <Toolbar>
        <ToolbarInner>
          <NavButtons>
            <svg width="24" height="24" viewBox="0 0 24 24" fill="none" stroke="#7c7c7c" strokeWidth="1.800"><path d="M19.500 12H5M12 4.800L4.800 12l7.200 7.200" /></svg>
            <svg width="24" height="24" viewBox="0 0 24 24" fill="none" stroke="#7c7c7c" strokeWidth="1.800"><path d="M4.500 12H19M12 4.800l7.200 7.200-7.200 7.200" /></svg>
            <svg width="24" height="24" viewBox="0 0 24 24" fill="none" stroke="#c7c7c7" strokeWidth="2"><path d="M18.300 9A7 7 0 1 0 19 13.500M19 4v6.200h-6.200" /></svg>
          </NavButtons>
          <AddressBar>
            <SiteInfo>
              <svg width="16" height="16" viewBox="0 0 16 16" fill="none" stroke="#d5d7d5" strokeWidth="1.700"><circle cx="3" cy="4" r="2" /><path d="M8 4h7M1 12h7" /><circle cx="13" cy="12" r="2" /></svg>
            </SiteInfo>
            <Url><b>explorer.hiro.so</b>/txid/0x18c055e5eb040de144b1f40b1cbb356de89011b5db3cddb38f2a47b84b6e8aa4?chain=testnet</Url>
            <svg width="20" height="20" viewBox="0 0 20 20" fill="none" stroke="#c7c7c7" strokeWidth="1.700"><path d="M10 1.900l2.300 5.400 5.900.5-4.500 3.900 1.400 5.700-5.100-3-5.100 3 1.400-5.700-4.500-3.900 5.900-.5z" /></svg>
          </AddressBar>
          <ToolbarActions>
            <svg width="22" height="22" viewBox="0 0 22 22" fill="none" stroke="#c7c7c7" strokeWidth="2"><path d="M3 4.500h14.500V20H3v-4.700a3 3 0 0 0 0-5.800z" strokeLinejoin="round" /><path d="M8.500 4a2 2 0 0 1 4 0zM18 10a2.200 2.200 0 0 1 0 4z" fill="#c7c7c7" strokeWidth="1" /></svg>
            <ToolbarDivider />
            <MdQueueMusic size={26} color="#c7c7c7" />
            <Avatar>N</Avatar>
            <svg width="4" height="20" viewBox="0 0 4 20" fill="#c7c7c7"><circle cx="2" cy="2.500" r="1.900" /><circle cx="2" cy="10" r="1.900" /><circle cx="2" cy="17" r="1.900" /></svg>
          </ToolbarActions>
        </ToolbarInner>
      </Toolbar>
    </>
  );
}

function PageHeader() {
  return (
    <Header>
      <Logo><StacksMark size={22} color="#fff" width={2.1} /></Logo>
      <MenuButton>
        <svg width="16" height="12" viewBox="0 0 16 12" stroke="#66696c" strokeWidth="1.600"><path d="M0 1h16M0 6h16M0 11h16" /></svg>
        <MenuText>Menu</MenuText>
        <svg width="9" height="14" viewBox="0 0 9 14" fill="none" stroke="#4f4d49" strokeWidth="1.200"><path d="M1 4l3.500-3L8 4M1 10l3.500 3L8 10" /></svg>
      </MenuButton>
      <SearchBox>
        <svg width="18" height="18" viewBox="0 0 18 18" fill="none" stroke="#4f4d49" strokeWidth="1.400"><circle cx="7.800" cy="7.600" r="6.600" /><path d="M12.500 12.400l4.700 4.600" /></svg>
        <Placeholder>Search transactions, addresses, domains, and blocks</Placeholder>
        <Shortcut>
          <svg width="11" height="11" viewBox="0 0 12 12" fill="none" stroke="#918f8b" strokeWidth="1"><path d="M4 4V2.300A1.700 1.700 0 1 0 2.300 4h7.400A1.700 1.700 0 1 0 8 2.300v7.400A1.700 1.700 0 1 0 9.700 8H2.300A1.700 1.700 0 1 0 4 9.700z" /></svg>
          <span>K</span>
        </Shortcut>
      </SearchBox>
      <Prices>
        <Price $width={79} $pad={11} $ls={-0.443}><StacksMark size={13} color="#11110f" width={2} />$0.63</Price>
        <Price $width={121} $pad={12} $ls={-0.305}><FaBtc size={15} color="#e7801f" transform="rotate(13)" />$110,041.66</Price>
      </Prices>
      <SettingsButton><Gear /></SettingsButton>
    </Header>
  );
}

function SummaryCard() {
  return (
    <Card $width={1406}>
      <CardHeader $ls={0.2}>Summary</CardHeader>
      <Rows>
        {summary.map((r, i) => (
          <Row key={i}>
            <Label $ls={r.ls}>{r.label}</Label>
            <Value $ls={r.vls}>
              {r.arrow && (
                <svg width="18" height="14" viewBox="0 0 18 14" fill="none" stroke="#2b2a28" strokeWidth="1.300"><path d="M5 13L16.500 1.500M6.500 1.300h10.200v10" /></svg>
              )}
              {r.link ? <Link $medium={r.arrow}>{r.value}</Link> : r.value}
            </Value>
          </Row>
        ))}
      </Rows>
    </Card>
  );
}

function SideCards() {
  return (
    <Side>
      <Card>
        <CardHeader $pad={29} $ls={0.06}>Contract details</CardHeader>
        <Details>
          <Identity>
            <CodeBadge>
              <svg width="20" height="16" viewBox="0 0 20 16" fill="none" stroke="#211f1d" strokeWidth="1.500"><path d="M5 4.500L1.500 8 5 11.500M15 4.500L18.500 8 15 11.500M12.300 1L7.700 15" /></svg>
            </CodeBadge>
            <Names>
              <ContractName>DeveloperGrantsDAO</ContractName>
              <Hash>0x18c055e5...4b6e8aa4</Hash>
            </Names>
          </Identity>
          <Stats>
            {stats.map((s) => (
              <Stat key={s.text}>{s.icon}<span>{s.text}</span></Stat>
            ))}
          </Stats>
          <Deployment>
            <Link>View deployment</Link>
            <svg width="17" height="17" viewBox="0 0 17 17" fill="none" stroke="#383632" strokeWidth="1.400"><path d="M8.500 3.200H1.700v12.100h12V8.500M7 10L16 1M10.500.9H16v5.600" /></svg>
          </Deployment>
        </Details>
      </Card>
      <Card>
        <CardHeader $pad={29}>Bitcoin anchor</CardHeader>
        <Details />
      </Card>
    </Side>
  );
}

function WindowsTaskbar() {
  return (
    <Taskbar>
      <Weather>
        <svg width="32" height="26" viewBox="0 0 32 26">
          <defs><linearGradient id="cl" x1="0" y1="0" x2="0" y2="1"><stop stopColor="#7ea5ee" /><stop offset="1" stopColor="#d8e5fb" /></linearGradient></defs>
          <circle cx="23" cy="8" r="6" fill="#f08a1c" />
          <path d="M8 25a7.500 7.500 0 0 1-1.500-14.800A8.500 8.500 0 0 1 22 8.500 8.300 8.300 0 0 1 24 25z" fill="url(#cl)" />
        </svg>
        <Badge $x={40} $y={7} $w={20} $bg="#c42b1c" $size={15}>9+</Badge>
      </Weather>
      <StartButton>
        <svg width="29" height="29" viewBox="0 0 29 29">
          <defs><linearGradient id="wn" x1="0" y1="0" x2="1" y2="1"><stop stopColor="#71e6fc" /><stop offset="1" stopColor="#0a93f5" /></linearGradient></defs>
          <path d="M0 0h14v14H0zM15 0h14v14H15zM0 15h14v14H0zM15 15h14v14H15z" fill="url(#wn)" />
        </svg>
      </StartButton>
      <TaskSearch>
        <svg width="19" height="19" viewBox="0 0 19 19" fill="none" stroke="#eef0f3" strokeWidth="2"><circle cx="7.800" cy="7.800" r="6.600" /><path d="M12.700 12.700l5 5" strokeLinecap="round" /></svg>
        <span>Search</span>
        <Corgi />
      </TaskSearch>
      <Apps>
        {apps.map((a, i) => (
          <AppButton key={i} $active={a.active}>
            <AppIcon $offset={a.offset}>{a.icon}</AppIcon>
            {a.badge}
            {a.open && <Indicator $active={a.active} />}
          </AppButton>
        ))}
      </Apps>
      <Tray>
        <TraySlot $width={36}>
          <svg width="14" height="9" viewBox="0 0 14 9" fill="none" stroke="#fff" strokeWidth="1.800"><path d="M.8 7.800L7 1.500l6.200 6.300" /></svg>
        </TraySlot>
        <TraySlot $width={43}>
          <svg width="20" height="20" viewBox="0 0 20 20">
            <path d="M5 15a4.500 4.500 0 0 1-.5-8.500A6.500 6.500 0 0 1 16 5l2 5-6 5z" fill="#8d9499" />
            <path d="M5 15a4.500 4.500 0 0 1-.5-8.500c4-.8 6.500 2 7.500 8.500z" fill="#e6e6e6" />
            <circle cx="14.500" cy="14" r="5.500" fill="#d92a35" /><path d="M12.500 12l4 4M16.500 12l-4 4" stroke="#fff" strokeWidth="1.300" />
          </svg>
        </TraySlot>
        <TraySlot $width={37}>
          <svg width="21" height="21" viewBox="0 0 21 21" fill="none" stroke="#fff" strokeWidth="1.400">
            <path d="M1 9.500A9.500 9.500 0 0 1 18.500 5.500M19.500 1v5h-5M6.500 15.500H1.700v5M2 16c2 3 5 4.300 8 4" />
            <circle cx="16" cy="15.500" r="5" fill="#ff9c0c" stroke="none" />
          </svg>
        </TraySlot>
        <TrayText $width={59} $align="center" $ls={-0.5}>ENG<br />IN</TrayText>
        <TraySlot $width={35}>
          <svg width="21" height="17" viewBox="0 0 21 17" fill="none" stroke="#fff" strokeWidth="1.500">
            <path d="M1 6.200a13.500 13.500 0 0 1 19 0M3.800 9.300a9.500 9.500 0 0 1 13.400 0M6.700 12.200a5.400 5.400 0 0 1 7.600 0" /><circle cx="10.500" cy="14.700" r="1.600" fill="#fff" stroke="none" />
          </svg>
        </TraySlot>
        <TraySlot $width={25}>
          <svg width="21" height="18" viewBox="0 0 21 18" fill="none" stroke="#fff" strokeWidth="1.400">
            <path d="M1 6.500h3.500L9 2.300v13.400l-4.500-4.200H1zM12 6a4.500 4.500 0 0 1 0 6M14.500 3.500a8 8 0 0 1 0 11M17 1.200a11.300 11.300 0 0 1 0 15.600" strokeLinejoin="round" />
          </svg>
        </TraySlot>
        <TraySlot $width={35}>
          <svg width="21" height="18" viewBox="0 0 21 18">
            <path d="M7 4.200h9.500a1.500 1.500 0 0 1 1.500 1.500v9a1.500 1.500 0 0 1-1.500 1.500h-14A1.500 1.500 0 0 1 1 14.700V12" fill="none" stroke="#fff" strokeWidth="1.500" />
            <path d="M3 11.500h5V6.500h3.500v8H3zM18.500 7.500h2v5h-2z" fill="#fff" /><path d="M4.500 0L0 7h2.500L1 12l6-7.500H4.500L6.500 1z" fill="#fff" />
          </svg>
        </TraySlot>
        <TrayText $width={90} $align="right" $ls={-0.2}>12:16<br />26-08-2025</TrayText>
      </Tray>
    </Taskbar>
  );
}

export default function App() {
  return (
    <Screen>
      <GlobalStyle />
      <BrowserChrome />
      <Viewport>
        <Page>
          <Banner>
            <svg width="18" height="17" viewBox="0 0 18 17" fill="none" stroke="#f2c40c" strokeWidth="1.200" strokeLinejoin="round"><path d="M9 .8l8.200 15.200H.8zM9 6v4.500M9 12.200v1.500" /></svg>
            You are viewing Testnet.
          </Banner>
          <PageHeader />
          <Tags>
            <Tag $width={151} $pad={10} $ls={-0.158}>
              <svg width="13" height="15" viewBox="0 0 13 15" fill="none" stroke="#4f4d49" strokeWidth="1.200"><path d="M4 .7C1.500.7 1 1.500 1 3.500v8c0 2 .5 2.800 3 2.800M8.200.7c-2.500 0-3 .8-3 2.800v8c0 2 .5 2.800 3 2.800M12.500.7c-2.500 0-3 .8-3 2.800v8c0 2 .5 2.800 3 2.800" /></svg>
              Contract deploy
            </Tag>
            <Tag $width={170} $pad={9} $ls={-0.25}>
              <svg width="14" height="11" viewBox="0 0 14 11" fill="none" stroke="#4f4d49" strokeWidth="1.300"><path d="M.5 6l4 4L13.500.7" /></svg>
              Confirmed in block
            </Tag>
          </Tags>
          <Title>DeveloperGrantsDAO</Title>
          <Columns>
            <SummaryCard />
            <SideCards />
          </Columns>
        </Page>
        <Scrollbar>
          <svg width="12" height="10" viewBox="0 0 12 10"><path d="M6 0.500L11.500 9.500H.5z" fill="#8b8b8b" stroke="#8b8b8b" strokeLinejoin="round" /></svg>
          <Thumb />
          <svg width="12" height="10" viewBox="0 0 12 10"><path d="M6 9.500L11.500.5H.5z" fill="#8b8b8b" stroke="#8b8b8b" strokeLinejoin="round" /></svg>
        </Scrollbar>
      </Viewport>
      <WindowsTaskbar />
    </Screen>
  );
}
